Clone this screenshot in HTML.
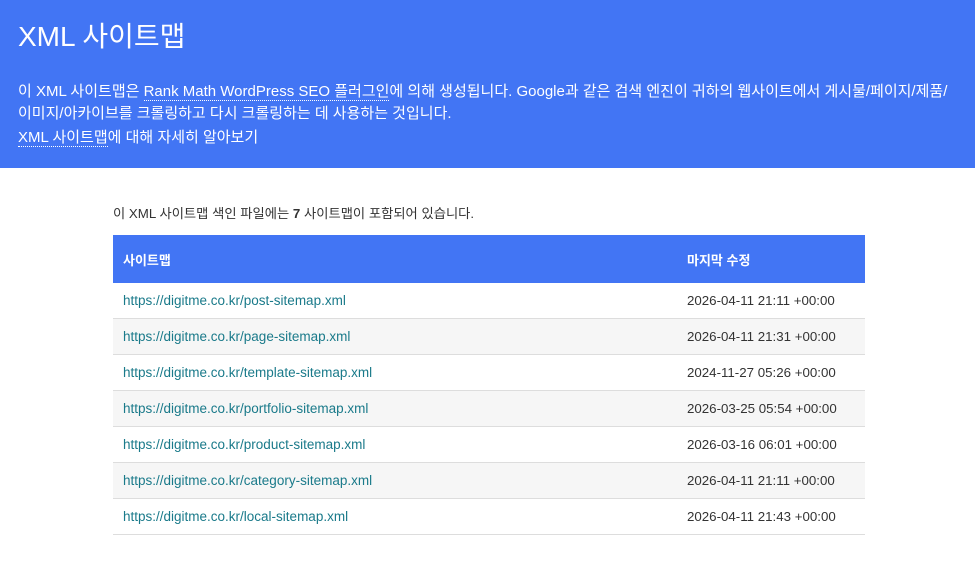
<!DOCTYPE html>
<html><head><meta charset="utf-8"><style>
body{margin:0;background:#fff;font-family:"Liberation Sans","Noto Sans CJK KR",sans-serif;color:#444;}
.hd{background:#4275f4;height:168px;color:#fff;padding:0 18px;box-sizing:border-box;}
h1{margin:0;position:absolute;top:19px;left:18px;font-size:28px;font-weight:400;line-height:36px;}
.p1{position:absolute;top:81px;left:18px;width:940px;font-size:15px;line-height:22px;}
.p2{position:absolute;top:127px;left:18px;font-size:15px;line-height:22px;}
.u{border-bottom:1px dotted #fff;}
.intro{position:absolute;top:203px;left:113px;font-size:13.3px;color:#333;}
table{position:absolute;top:235px;left:113px;width:752px;border-collapse:collapse;font-size:13.3px;}
th{background:#4275f4;color:#fff;text-align:left;height:48px;padding:0 10px;font-size:13px;}
td{height:35px;padding:0 10px;border-bottom:1px solid #ddd;color:#333;}
td a{color:#1a7a8a;text-decoration:none;font-size:13.5px;}
tr:nth-child(even) td{background:#f6f6f6;}
tr:nth-child(odd) td{background:#fff;}
</style></head><body>
<div class="hd">
<h1>XML 사이트맵</h1>
<div class="p1">이 XML 사이트맵은 <span class="u">Rank Math WordPress SEO 플러그인</span>에 의해 생성됩니다. Google과 같은 검색 엔진이 귀하의 웹사이트에서 게시물/페이지/제품/<br>이미지/아카이브를 크롤링하고 다시 크롤링하는 데 사용하는 것입니다.</div>
<div class="p2"><span class="u">XML 사이트맵</span>에 대해 자세히 알아보기</div>
</div>
<div class="intro">이 XML 사이트맵 색인 파일에는 <b>7</b> 사이트맵이 포함되어 있습니다.</div>
<table>
<thead><tr><th style="width:544px">사이트맵</th><th>마지막 수정</th></tr></thead>
<tbody>
<tr><td><a>https://digitme.co.kr/post-sitemap.xml</a></td><td>2026-04-11 21:11 +00:00</td></tr>
<tr><td><a>https://digitme.co.kr/page-sitemap.xml</a></td><td>2026-04-11 21:31 +00:00</td></tr>
<tr><td><a>https://digitme.co.kr/template-sitemap.xml</a></td><td>2024-11-27 05:26 +00:00</td></tr>
<tr><td><a>https://digitme.co.kr/portfolio-sitemap.xml</a></td><td>2026-03-25 05:54 +00:00</td></tr>
<tr><td><a>https://digitme.co.kr/product-sitemap.xml</a></td><td>2026-03-16 06:01 +00:00</td></tr>
<tr><td><a>https://digitme.co.kr/category-sitemap.xml</a></td><td>2026-04-11 21:11 +00:00</td></tr>
<tr><td><a>https://digitme.co.kr/local-sitemap.xml</a></td><td>2026-04-11 21:43 +00:00</td></tr>
</tbody></table>
</body></html>
